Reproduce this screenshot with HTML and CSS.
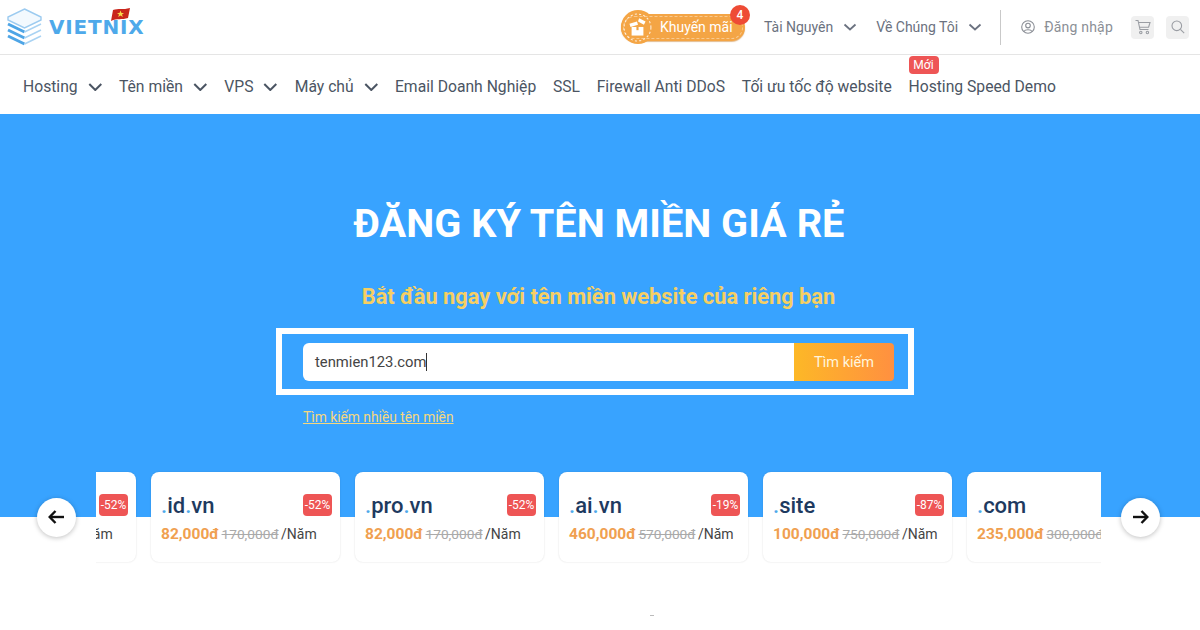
FILE: index.html
```html
<!DOCTYPE html>
<html lang="vi">
<head>
    <meta charset="UTF-8">
    <meta name="viewport" content="width=device-width, initial-scale=1.0">
    <title>Vietnix</title>
    <link rel="stylesheet" href="styles.css">
</head>
<body>

    <!-- top bar -->
    <header class="topbar">
        <a class="logo" href="#">
            <svg class="logo-mark" width="35" height="38" viewBox="0 0 35 38" fill="none">
                <path d="M17.5 1 L34 9 V12 L17.5 20 L1 12 V9 Z" stroke="#9ccbf0" stroke-width="1.4" fill="#f3f9fe"/>
                <path d="M1 16 L17.5 24" stroke="#4ea5e6" stroke-width="3"/>
                <path d="M17.5 24 L34 16" stroke="#a9d3f3" stroke-width="1.6"/>
                <path d="M1 22 L17.5 30" stroke="#4ea5e6" stroke-width="3"/>
                <path d="M17.5 30 L34 22" stroke="#a9d3f3" stroke-width="1.6"/>
                <path d="M1 28 L17.5 36" stroke="#4ea5e6" stroke-width="3"/>
                <path d="M17.5 36 L34 28" stroke="#a9d3f3" stroke-width="1.6"/>
            </svg>
            <span class="logo-text">VIETNIX</span>
            <svg class="logo-flag" width="19" height="13" viewBox="0 0 19 13">
                <path d="M2 2 C7 0 12 2 19 0 L17 10 C11 12 6 10 0 13 Z" fill="#c9261c"/>
                <path d="M9.5 2.5 L10.5 5 L13 5 L11 6.6 L11.8 9 L9.5 7.6 L7.2 9 L8 6.6 L6 5 L8.5 5 Z" fill="#f7d84a"/>
            </svg>
        </a>

        <div class="top-right">
            <a class="promo" href="#">
                <span class="promo-icon">
                    <svg width="29" height="29" viewBox="0 0 27 27" fill="none">
                        <circle cx="13.5" cy="13.5" r="12.5" stroke="#fff" stroke-width="1" stroke-dasharray="2 2" opacity=".8"/>
                        <path d="M8 13 H19 V21 H8 Z" fill="#fff"/>
                        <path d="M12.5 13 H14.5 V16 H12.5 Z" fill="#f2a341"/>
                        <path d="M6 10 L13 8 L14 11 L7 13 Z" fill="#fff"/>
                        <path d="M15 5 L21 8 L19.5 11 L14 8 Z" fill="#fff"/>
                    </svg>
                </span>
                <span class="promo-label">Khuyến mãi</span>
                <span class="promo-count">4</span>
            </a>
            <a class="top-link first-link" href="#">Tài Nguyên
                <svg class="chev-sm" width="14" height="8" viewBox="0 0 14 8" fill="none"><path d="M1.5 1.5 L7 6.5 L12.5 1.5" stroke="#6b7280" stroke-width="1.8"/></svg>
            </a>
            <a class="top-link" href="#">Về Chúng Tôi
                <svg class="chev-sm" width="14" height="8" viewBox="0 0 14 8" fill="none"><path d="M1.5 1.5 L7 6.5 L12.5 1.5" stroke="#6b7280" stroke-width="1.8"/></svg>
            </a>
            <span class="top-divider"></span>
            <a class="login" href="#">
                <svg width="14" height="14" viewBox="0 0 14 14" fill="none" stroke="#8b8f96" stroke-width="1.1">
                    <circle cx="7" cy="7" r="6.3"/>
                    <circle cx="7" cy="5.6" r="2.3"/>
                    <path d="M3 11.4 C4 9.2 10 9.2 11 11.4"/>
                </svg>
                Đăng nhập
            </a>
            <span class="icon-btn cart-btn">
                <svg width="16" height="16" viewBox="0 0 16 16" fill="none" stroke="#9a9da3" stroke-width="1.1">
                    <path d="M0.5 1.5 H3 L5 10.5 H13.5"/>
                    <path d="M3.4 3.5 H15 L13.6 8.2 H4.4"/>
                    <circle cx="5.8" cy="13.5" r="1.2"/>
                    <circle cx="12.4" cy="13.5" r="1.2"/>
                </svg>
            </span>
            <span class="icon-btn">
                <svg width="14" height="14" viewBox="0 0 14 14" fill="none" stroke="#9a9da3" stroke-width="1.1">
                    <circle cx="5.8" cy="5.8" r="4.8"/>
                    <path d="M9.4 9.4 L13.2 13.2"/>
                </svg>
            </span>
        </div>
    </header>

    <!-- main menu -->
    <nav class="menu">
        <a class="menu-item" href="#">Hosting <svg class="chev" viewBox="0 0 14 8" fill="none"><path d="M1 1 L7 7 L13 1" stroke="#4b5563" stroke-width="2"/></svg></a>
        <a class="menu-item" href="#">Tên miền <svg class="chev" viewBox="0 0 14 8" fill="none"><path d="M1 1 L7 7 L13 1" stroke="#4b5563" stroke-width="2"/></svg></a>
        <a class="menu-item" href="#">VPS <svg class="chev" viewBox="0 0 14 8" fill="none"><path d="M1 1 L7 7 L13 1" stroke="#4b5563" stroke-width="2"/></svg></a>
        <a class="menu-item" href="#">Máy chủ <svg class="chev" viewBox="0 0 14 8" fill="none"><path d="M1 1 L7 7 L13 1" stroke="#4b5563" stroke-width="2"/></svg></a>
        <a class="menu-item" href="#">Email Doanh Nghiệp</a>
        <a class="menu-item" href="#">SSL</a>
        <a class="menu-item" href="#">Firewall Anti DDoS</a>
        <a class="menu-item" href="#">Tối ưu tốc độ website</a>
        <a class="menu-item has-tag" href="#">Hosting Speed Demo <span class="tag-new">Mới</span></a>
    </nav>

    <!-- hero -->
    <section class="hero">
        <h1 class="hero-title">ĐĂNG KÝ TÊN MIỀN GIÁ RẺ</h1>
        <h2 class="hero-sub">Bắt đầu ngay với tên miền website của riêng bạn</h2>
        <div class="search-frame">
            <div class="search-input">tenmien123.com<span class="caret"></span></div>
            <button class="search-btn">Tìm kiếm</button>
        </div>
        <div class="more-row">
            <a class="more-link" href="#">Tìm kiếm nhiều tên miền</a>
        </div>
    </section>

    <!-- domain prices -->
    <section class="slider">
        <button class="arrow">
            <svg width="17" height="14" viewBox="0 0 17 14" fill="none" stroke="#111" stroke-width="2.4"><path d="M16 7 H2"/><path d="M7.5 1 L1.7 7 L7.5 13"/></svg>
        </button>
        <div class="slider-view">
            <div class="slider-track">
                <div class="card">
                    <div class="card-top"><span class="card-name"><i>.</i>net<i>.</i>vn</span><span class="card-off">-52%</span></div>
                    <div class="card-price"><b>82,000đ</b> <s>170,000đ</s> /Năm</div>
                </div>
                <div class="card">
                    <div class="card-top"><span class="card-name"><i>.</i>id<i>.</i>vn</span><span class="card-off">-52%</span></div>
                    <div class="card-price"><b>82,000đ</b> <s>170,000đ</s> /Năm</div>
                </div>
                <div class="card">
                    <div class="card-top"><span class="card-name"><i>.</i>pro<i>.</i>vn</span><span class="card-off">-52%</span></div>
                    <div class="card-price"><b>82,000đ</b> <s>170,000đ</s> /Năm</div>
                </div>
                <div class="card">
                    <div class="card-top"><span class="card-name"><i>.</i>ai<i>.</i>vn</span><span class="card-off">-19%</span></div>
                    <div class="card-price"><b>460,000đ</b> <s>570,000đ</s> /Năm</div>
                </div>
                <div class="card">
                    <div class="card-top"><span class="card-name"><i>.</i>site</span><span class="card-off">-87%</span></div>
                    <div class="card-price"><b>100,000đ</b> <s>750,000đ</s> /Năm</div>
                </div>
                <div class="card">
                    <div class="card-top"><span class="card-name"><i>.</i>com</span></div>
                    <div class="card-price"><b>235,000đ</b> <s>300,000đ</s> /Năm</div>
                </div>
            </div>
        </div>
        <button class="arrow">
            <svg width="17" height="14" viewBox="0 0 17 14" fill="none" stroke="#111" stroke-width="2.4"><path d="M1 7 H15"/><path d="M9.5 1 L15.3 7 L9.5 13"/></svg>
        </button>
    </section>

    <div class="stray-mark"></div>

</body>
</html>
```

FILE: styles.css
```css
*{
    box-sizing: border-box;
}
body{
    margin: 0;
    height: 630px;
    overflow: hidden;
    background-color: #fff;
    font-family: Roboto, "Liberation Sans", sans-serif;
    color: #4b5563;
}
a{
    color: inherit;
    text-decoration: none;
}

/* top bar */
.topbar{
    display: flex;
    justify-content: space-between;
    align-items: center;
    height: 55px;
    padding: 0 11px 0 7px;
    border-bottom: 1px solid #e5e5e5;
}
.logo{
    position: relative;
    display: flex;
    align-items: center;
    gap: 7px;
}
.logo-mark{
    flex: none;
}
.logo-text{
    font-family: "DejaVu Sans", sans-serif;
    font-size: 20px;
    font-weight: 700;
    letter-spacing: .8px;
    color: #4ea9ea;
}
.logo-flag{
    position: absolute;
    left: 104px;
    top: 0;
}
.top-right{
    display: flex;
    align-items: center;
}
.promo{
    position: relative;
    display: flex;
    align-items: center;
    width: 124px;
    height: 27px;
    margin-right: 19px;
    border-radius: 14px;
    background-color: #f4a545;
    outline: 1px dashed rgba(255,255,255,.4);
    outline-offset: -3px;
    box-shadow: 0 1px 1px rgba(200,120,30,.5);
}
.promo-icon{
    display: flex;
    align-items: center;
    justify-content: center;
    width: 34px;
    height: 34px;
    flex: none;
    border-radius: 50%;
    background-color: #f4a545;
}
.promo-label{
    margin-left: 5px;
    font-size: 14px;
    color: #fff;
}
.promo-count{
    position: absolute;
    top: -9px;
    right: -5px;
    width: 20px;
    height: 20px;
    border-radius: 50%;
    background-color: #ee4b35;
    color: #fff;
    font-size: 12px;
    font-weight: 500;
    line-height: 20px;
    text-align: center;
}
.top-link{
    display: flex;
    align-items: center;
    gap: 10px;
    margin-right: 20px;
    font-size: 14px;
    color: #6b7280;
}
.first-link{
    margin-right: 19px;
}
.top-divider{
    width: 1px;
    height: 35px;
    margin: 0 20px 0 -2px;
    background-color: #c9c9c9;
}
.login{
    display: flex;
    align-items: center;
    gap: 9px;
    margin-right: 18px;
    font-size: 14px;
    letter-spacing: .2px;
    color: #8b8f96;
}
.icon-btn{
    display: flex;
    align-items: center;
    justify-content: center;
    width: 23px;
    height: 23px;
    border-radius: 4px;
    background-color: #f0f0f0;
}
.cart-btn{
    margin-right: 12px;
}

/* main menu */
.menu{
    display: flex;
    align-items: center;
    gap: 16.7px;
    height: 59px;
    padding: 4px 0 0 23px;
}
.menu-item{
    display: flex;
    align-items: center;
    gap: 10px;
    font-size: 15.7px;
    color: #4b5563;
    white-space: nowrap;
}
.chev{
    width: 14.6px;
    height: 8px;
}
.has-tag{
    position: relative;
}
.tag-new{
    position: absolute;
    left: 0;
    top: -21px;
    width: 30px;
    height: 18px;
    border-radius: 4px;
    background-color: #ee5555;
    color: #fff;
    font-size: 12px;
    line-height: 18px;
    text-align: center;
}

/* hero */
.hero{
    height: 403px;
    padding-top: 86px;
    background-color: #38a3ff;
    text-align: center;
}
.hero-title{
    margin: 0 2px 0 0;
    font-size: 39.7px;
    font-weight: 700;
    line-height: 48px;
    color: #fff;
}
.hero-sub{
    margin: 35px 3px 0 0;
    font-size: 21.8px;
    font-weight: 700;
    line-height: 28px;
    color: #f6cf63;
}
.search-frame{
    display: flex;
    width: 638px;
    height: 67px;
    margin: 17px 0 0 276px;
    padding: 9px 14px 8px 21px;
    border: 6px solid #fff;
}
.search-input{
    flex: 1;
    padding-left: 12px;
    border-radius: 6px 0 0 6px;
    background-color: #fff;
    color: #444;
    font-size: 14.8px;
    line-height: 38px;
    text-align: left;
}
.caret{
    display: inline-block;
    width: 1px;
    height: 18px;
    vertical-align: -4px;
    background-color: #333;
}
.search-btn{
    width: 100px;
    border: 0;
    border-radius: 0 4px 4px 0;
    background: linear-gradient(90deg, #fdb827, #ff9040);
    color: #fff5dc;
    font-family: inherit;
    font-size: 14.5px;
}
.more-row{
    width: 638px;
    margin: 12px 0 0 276px;
    padding-left: 27px;
    text-align: left;
}
.more-link{
    font-size: 13.8px;
    color: #f5d77e;
    text-decoration: underline;
}

/* domain prices */
.slider{
    display: flex;
    align-items: center;
    gap: 20px;
    margin-top: -47px;
    padding-left: 37px;
}
.arrow{
    display: flex;
    align-items: center;
    justify-content: center;
    flex: none;
    width: 39px;
    height: 39px;
    padding: 0;
    border: 0;
    border-radius: 50%;
    background-color: #fff;
    box-shadow: 0 1px 5px rgba(0,0,0,.25);
}
.slider-view{
    width: 1005px;
    overflow: hidden;
    padding: 2px 0;
}
.slider-track{
    display: flex;
    gap: 15px;
    margin-left: -149px;
}
.card{
    flex: none;
    width: 189px;
    height: 90px;
    padding: 22px 8px 0 10px;
    border-radius: 8px;
    background-color: #fff;
    box-shadow: 0 0 2px rgba(0,0,0,.14);
}
.card-top{
    display: flex;
    justify-content: space-between;
    align-items: center;
    height: 22px;
}
.card-name{
    font-size: 22px;
    font-weight: 500;
    color: #1e3a5f;
}
.card-name i{
    font-style: normal;
    color: #4ea9ea;
}
.card-off{
    width: 29px;
    height: 22px;
    border-radius: 4px;
    background-color: #ee5555;
    color: #fff;
    font-size: 12px;
    line-height: 22px;
    text-align: center;
}
.card-price{
    margin-top: 8px;
    font-size: 14px;
    line-height: 20px;
    word-spacing: -1px;
    color: #444;
    white-space: nowrap;
}
.card-price b{
    font-size: 15.5px;
    color: #f0a050;
}
.card-price s{
    font-size: 13.7px;
    color: #aaa;
}
.stray-mark{
    width: 4px;
    height: 1px;
    margin: 51px 0 0 650px;
    background-color: #bbb;
}
```
